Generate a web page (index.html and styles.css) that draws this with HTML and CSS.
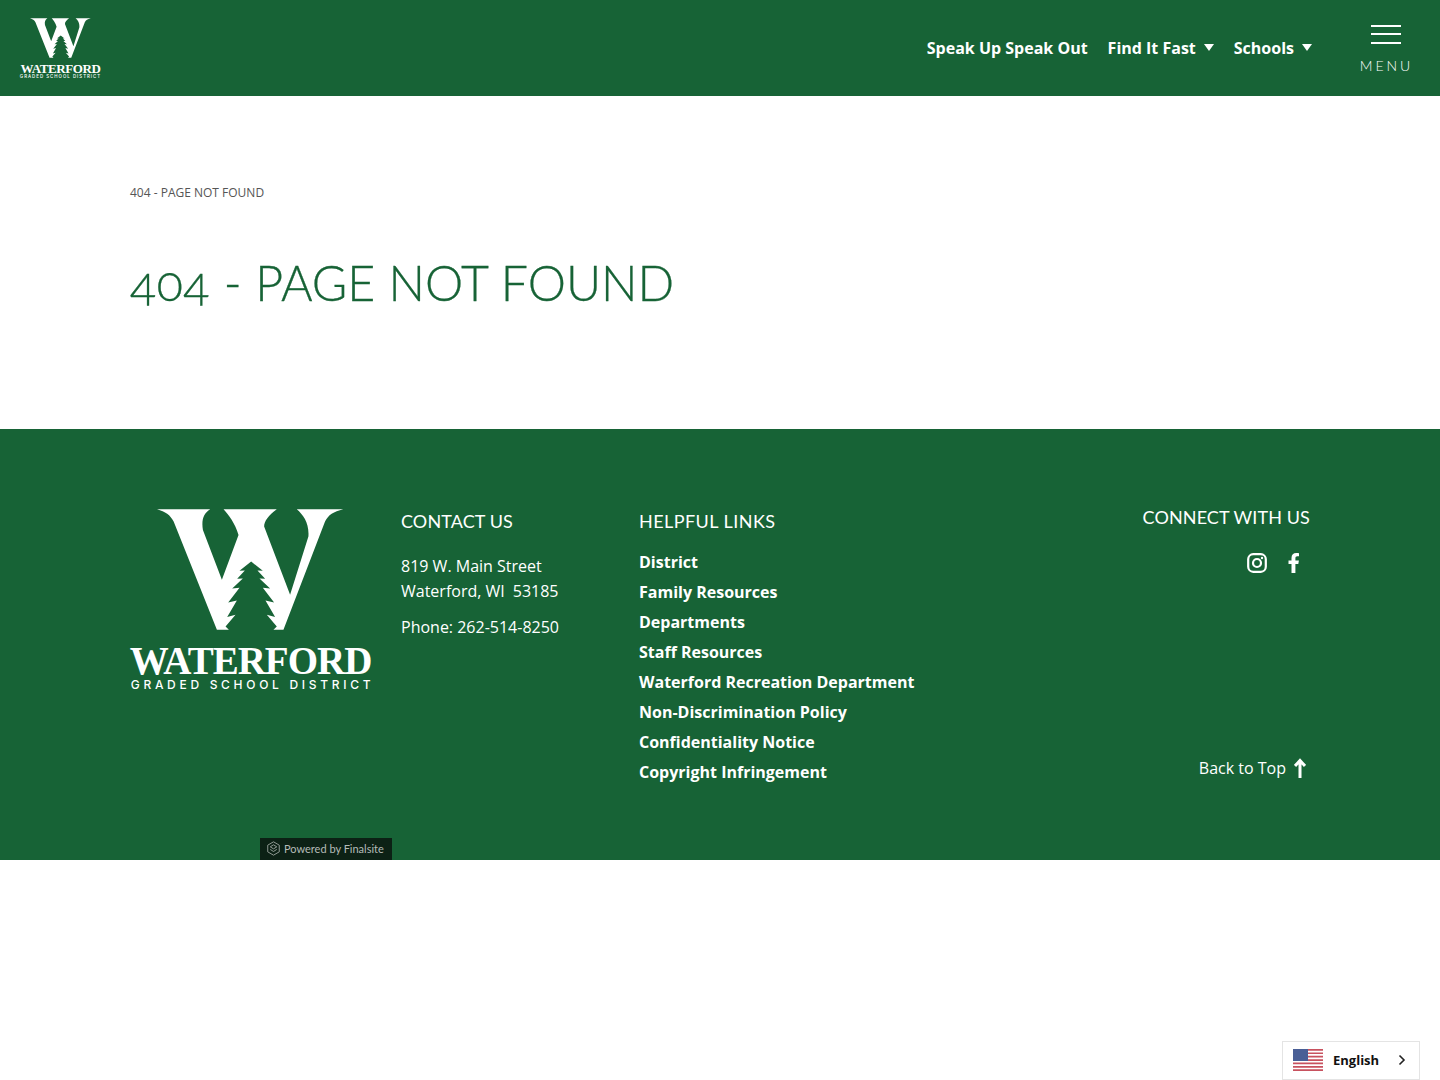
FILE: index.html
```html
<!DOCTYPE html>
<html lang="en">
<head>
    <meta charset="UTF-8">
    <meta name="viewport" content="width=device-width, initial-scale=1.0">
    <title>404 - Page Not Found - Waterford Graded School District</title>
    <link rel="stylesheet" href="styles.css">
</head>
<body>

    <!-- Header -->
    <header class="site-header">
        <a href="#" class="logo logo-small">
            <svg class="logo-mark" viewBox="110 28 562 362" aria-hidden="true">
                <path fill-rule="evenodd" d="M110 28H670C640 35 625 45 615 65L490 390H290L160 65C150 45 135 35 110 28ZM270 28C250 40 243 60 248 90L305 240L355 105C345 70 325 45 310 28ZM470 28C445 45 432 65 432 80L510 285L565 110C568 70 550 45 530 28ZM393 185L428 213L412 212L435 237L418 236L450 266L428 264L462 308L436 302L465 352L440 345L470 380L460 390H326L316 380L346 345L321 352L350 302L324 308L358 264L336 266L368 236L351 237L374 212L358 213Z"/>
            </svg>
            <span class="logo-name">WATERFORD</span>
            <span class="logo-sub">GRADED SCHOOL DISTRICT</span>
        </a>
        <div class="header-right">
            <nav class="top-nav">
                <a href="#">Speak Up Speak Out</a>
                <a href="#" class="has-caret">Find It Fast</a>
                <a href="#" class="has-caret">Schools</a>
            </nav>
            <button class="menu-btn">
                <span class="menu-bars"><i></i><i></i><i></i></span>
                <span class="menu-label">MENU</span>
            </button>
        </div>
    </header>

    <!-- Main content -->
    <main class="page-content">
        <p class="breadcrumb">404 - PAGE NOT FOUND</p>
        <h1 class="page-title"><span class="title-nums">404 -</span> PAGE NOT FOUND</h1>
    </main>

    <!-- Footer -->
    <footer class="site-footer">
        <div class="footer-columns">
            <a href="#" class="logo logo-large">
                <svg class="logo-mark" viewBox="110 28 562 362" aria-hidden="true">
                    <path fill-rule="evenodd" d="M110 28H670C640 35 625 45 615 65L490 390H290L160 65C150 45 135 35 110 28ZM270 28C250 40 243 60 248 90L305 240L355 105C345 70 325 45 310 28ZM470 28C445 45 432 65 432 80L510 285L565 110C568 70 550 45 530 28ZM393 185L428 213L412 212L435 237L418 236L450 266L428 264L462 308L436 302L465 352L440 345L470 380L460 390H326L316 380L346 345L321 352L350 302L324 308L358 264L336 266L368 236L351 237L374 212L358 213Z"/>
                </svg>
                <span class="logo-name">WATERFORD</span>
                <span class="logo-sub">GRADED SCHOOL DISTRICT</span>
            </a>

            <div class="footer-contact">
                <h2>CONTACT US</h2>
                <p class="address">819 W. Main Street<br>Waterford, WI&ensp;53185</p>
                <p class="phone">Phone: 262-514-8250</p>
            </div>

            <div class="footer-links">
                <h2>HELPFUL LINKS</h2>
                <ul>
                    <li><a href="#">District</a></li>
                    <li><a href="#">Family Resources</a></li>
                    <li><a href="#">Departments</a></li>
                    <li><a href="#">Staff Resources</a></li>
                    <li><a href="#">Waterford Recreation Department</a></li>
                    <li><a href="#">Non-Discrimination Policy</a></li>
                    <li><a href="#">Confidentiality Notice</a></li>
                    <li><a href="#">Copyright Infringement</a></li>
                </ul>
            </div>

            <div class="footer-connect">
                <h2>CONNECT WITH US</h2>
                <div class="social">
                    <a href="#" aria-label="Instagram">
                        <svg class="icon-instagram" viewBox="0 0 20 20">
                            <rect x="1.2" y="1.2" width="17.6" height="17.6" rx="5" fill="none" stroke="#fff" stroke-width="2.2"/>
                            <circle cx="10" cy="10" r="4" fill="none" stroke="#fff" stroke-width="2.2"/>
                            <circle cx="15" cy="5" r="1.2" fill="#fff"/>
                        </svg>
                    </a>
                    <a href="#" aria-label="Facebook">
                        <svg class="icon-facebook" viewBox="0 0 12 20">
                            <path fill="#fff" d="M3.5 20V11H.5V7.500H3.500V5C3.500 1.800 5.400 0 8.300 0C9.700 0 11 .2 11 .2V3.300H9.400C7.900 3.300 7.400 4.200 7.400 5.200V7.500H10.900L10.300 11H7.400V20Z"/>
                        </svg>
                    </a>
                </div>
                <a href="#" class="back-to-top">
                    Back to Top
                    <svg viewBox="0 0 12 20" aria-hidden="true">
                        <path fill="none" stroke="#fff" stroke-width="3" d="M6 20V2.500M1 8L6 2.500L11 8"/>
                    </svg>
                </a>
            </div>
        </div>

        <a href="#" class="powered-by">
            <svg viewBox="0 0 14 16" aria-hidden="true">
                <path fill="none" stroke="#9aa39d" stroke-width="1" d="M7 .8L13.200 4.400V11.600L7 15.200L.8 11.600V4.400ZM7 4L10.500 6.200L7 8.400L3.500 6.200ZM3.500 9L7 11.200L10.500 9"/>
            </svg>
            Powered by Finalsite
        </a>
    </footer>

    <!-- Language widget -->
    <div class="lang-switch">
        <svg class="flag" viewBox="0 0 30 22" aria-hidden="true">
            <rect width="30" height="22" fill="#fff"/>
            <path stroke="#c8525f" stroke-width="1.700" d="M0 .85H30M0 4.250H30M0 7.650H30M0 11.050H30M0 14.450H30M0 17.850H30M0 21.150H30"/>
            <rect width="15" height="12" fill="#4a5f96"/>
        </svg>
        <span class="lang-name">English</span>
        <svg class="chevron" viewBox="0 0 8 12" aria-hidden="true">
            <path fill="none" stroke="#222" stroke-width="1.600" d="M1.500 1.500L6 6L1.500 10.500"/>
        </svg>
    </div>

</body>
</html>
```

FILE: styles.css
```css
* {
    margin: 0;
    padding: 0;
    box-sizing: border-box;
}

body {
    font-family: 'Open Sans', sans-serif;
    background: #fff;
    color: #fff;
}

a {
    color: inherit;
    text-decoration: none;
}

ul {
    list-style: none;
}

/* Logo */
.logo {
    display: flex;
    flex-direction: column;
    align-items: center;
    color: #fff;
}

.logo-mark {
    display: block;
    fill: #fff;
}

.logo-name {
    font-family: 'Liberation Serif', serif;
    font-weight: 700;
    white-space: nowrap;
}

.logo-sub {
    font-family: 'Inter', sans-serif;
    font-weight: 500;
    white-space: nowrap;
}

.logo-small {
    width: 81px;
}

.logo-small .logo-mark {
    width: 61px;
    height: 40px;
}

.logo-small .logo-name {
    font-size: 13px;
    line-height: 10px;
    margin-top: 6px;
    letter-spacing: -0.42px;
}

.logo-small .logo-sub {
    font-size: 4.400px;
    line-height: 5px;
    letter-spacing: 1px;
}

.logo-large {
    width: 241px;
    margin-right: 30px;
}

.logo-large .logo-mark {
    width: 187px;
    height: 121px;
}

.logo-large .logo-name {
    font-size: 39px;
    line-height: 34px;
    margin-top: 14px;
    letter-spacing: -1px;
}

.logo-large .logo-sub {
    font-size: 12px;
    line-height: 12px;
    margin: 1px -4px 0 0;
    letter-spacing: 3.700px;
}

/* Header */
.site-header {
    display: flex;
    align-items: center;
    justify-content: space-between;
    height: 96px;
    padding: 0 28px 0 20px;
    background: #176336;
}

.site-header .logo {
    padding-top: 1px;
}

.header-right {
    display: flex;
    align-items: center;
    gap: 47px;
}

.top-nav {
    display: flex;
    gap: 20px;
    font-size: 16px;
    font-weight: 700;
    line-height: 22px;
}

.has-caret::after {
    content: "";
    display: inline-block;
    margin-left: 8px;
    vertical-align: 3px;
    border-left: 5px solid transparent;
    border-right: 5px solid transparent;
    border-top: 7px solid #fff;
}

.menu-btn {
    display: flex;
    flex-direction: column;
    align-items: center;
    width: 53px;
    border: none;
    background: transparent;
    color: #fff;
    font-family: 'Lato', sans-serif;
    padding-top: 3px;
}

.menu-bars {
    display: flex;
    flex-direction: column;
    gap: 6.500px;
    width: 30px;
}

.menu-bars i {
    display: block;
    height: 2px;
    background: #fff;
}

.menu-label {
    margin-top: 13px;
    padding-left: 2px;
    font-size: 14px;
    font-weight: 300;
    line-height: 18px;
    letter-spacing: 3px;
}

/* Main */
.page-content {
    height: 333px;
    padding: 88px 130px 0;
}

.breadcrumb {
    font-size: 12px;
    line-height: 18px;
    color: #555;
}

.page-title {
    margin-top: 50px;
    font-family: 'Lato', sans-serif;
    font-size: 48.3px;
    font-weight: 300;
    line-height: 60px;
    color: #176336;
    font-variant-numeric: oldstyle-nums;
    -webkit-text-stroke: 0.3px #176336;
}

.title-nums {
    letter-spacing: 0.6px;
}

/* Footer */
.site-footer {
    height: 431px;
    padding: 80px 130px 0;
    background: #176336;
}

.footer-columns {
    display: flex;
}

.site-footer h2 {
    font-family: 'Lato', sans-serif;
    font-size: 18px;
    font-weight: 400;
    line-height: 16px;
    letter-spacing: 0.1px;
}

.footer-contact {
    width: 238px;
    padding-top: 4px;
    font-size: 16px;
    line-height: 25px;
}

.address {
    margin-top: 25px;
}

.phone {
    margin-top: 11px;
}

.footer-links {
    flex: 1;
    padding-top: 4px;
}

.site-footer .footer-links h2 {
    letter-spacing: 0.45px;
}

.footer-links ul {
    margin-top: 18px;
    font-size: 16px;
    font-weight: 700;
    line-height: 30px;
}

.footer-connect {
    display: flex;
    flex-direction: column;
    align-items: flex-end;
    padding-bottom: 7px;
}

.social {
    display: flex;
    align-items: center;
    gap: 21px;
    margin-top: 28px;
    height: 20px;
}

.social a,
.social svg {
    display: block;
}

.icon-instagram {
    width: 20px;
    height: 20px;
}

.icon-facebook {
    width: 12px;
    height: 20px;
    margin-right: 10px;
}

.back-to-top {
    display: flex;
    align-items: center;
    gap: 8px;
    margin-top: auto;
    padding-right: 4px;
    font-size: 16px;
    line-height: 24px;
}

.back-to-top svg {
    width: 12px;
    height: 20px;
}

.powered-by {
    display: flex;
    align-items: center;
    gap: 4px;
    width: 132px;
    height: 22px;
    margin: 51px 0 0 130px;
    padding: 0 0 2px 7px;
    background: #0c2115;
    color: #b5bbb7;
    font-family: 'Lato', sans-serif;
    font-size: 11px;
    white-space: nowrap;
}

.powered-by svg {
    width: 13px;
    height: 15px;
}

/* Language widget */
.lang-switch {
    position: fixed;
    right: 20px;
    bottom: 0;
    display: flex;
    align-items: center;
    width: 138px;
    height: 39px;
    padding: 0 0 2px 10px;
    background: #fff;
    border: 1px solid #e4e4e4;
    color: #111;
}

.flag {
    width: 30px;
    height: 22px;
}

.lang-name {
    margin-left: 10px;
    font-size: 13px;
    font-weight: 700;
}

.chevron {
    width: 8px;
    height: 12px;
    margin-left: 19px;
}
```
